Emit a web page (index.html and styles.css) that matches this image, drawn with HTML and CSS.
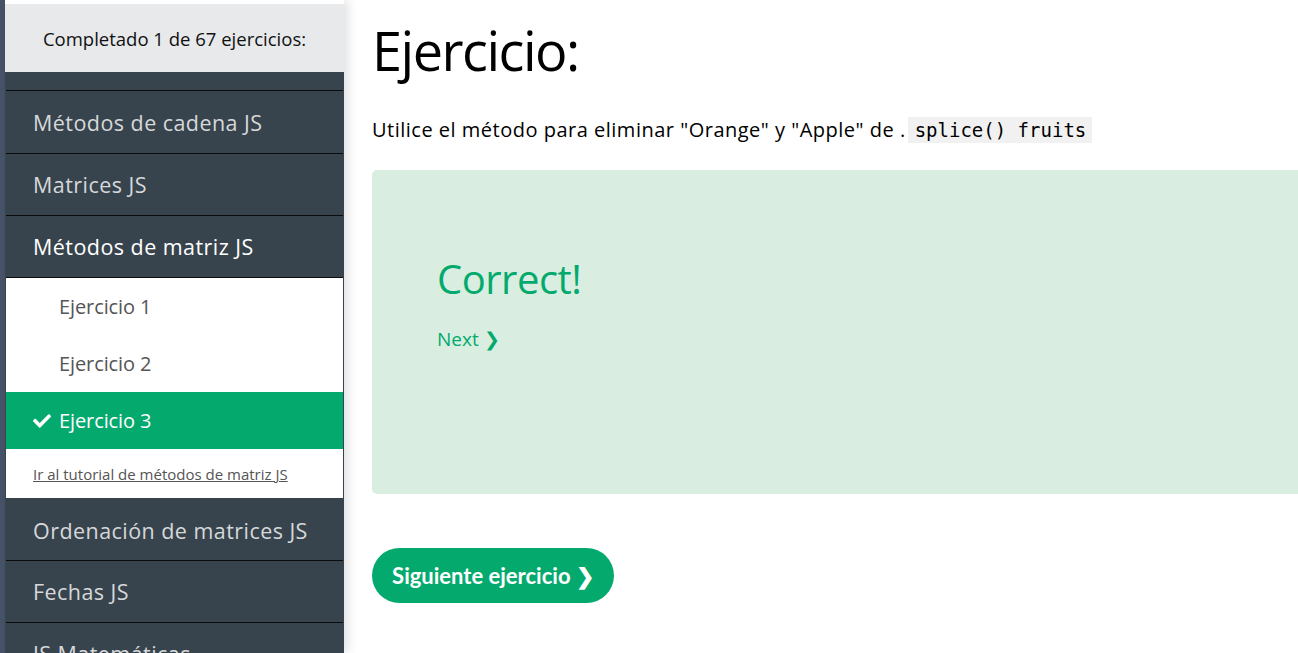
FILE: index.html
```html
<!DOCTYPE html>
<html lang="es">
<head>
<meta charset="utf-8">
<title>Ejercicio</title>
<link rel="stylesheet" href="styles.css">
</head>
<body>
<div class="rail"></div>
<aside class="sidebar">
  <div class="top-gap"></div>
  <div class="progress">Completado 1 de 67 ejercicios:</div>
  <div class="spacer"></div>
  <nav class="menu">
    <div class="item first">Métodos de cadena JS</div>
    <div class="item">Matrices JS</div>
    <div class="item active">Métodos de matriz JS</div>
    <div class="submenu">
      <div class="sub">Ejercicio 1</div>
      <div class="sub">Ejercicio 2</div>
      <div class="sub done"><svg class="check" viewBox="0 0 512 512" width="18" height="18"><path fill="#fff" d="M173.9 439.4l-166.4-166.4c-10-10-10-26.2 0-36.2l36.2-36.2c10-10 26.2-10 36.2 0L192 312.7 432.1 72.6c10-10 26.2-10 36.2 0l36.2 36.2c10 10 10 26.2 0 36.2L210.1 439.4c-10 10-26.2 10-36.2 0z"/></svg>Ejercicio 3</div>
      <div class="tut"><a href="#">Ir al tutorial de métodos de matriz JS</a></div>
    </div>
    <div class="item after-sub">Ordenación de matrices JS</div>
    <div class="item">Fechas JS</div>
    <div class="item">JS Matemáticas</div>
  </nav>
</aside>
<main class="main">
  <h1 class="title">Ejercicio:</h1>
  <p class="task">Utilice el método para eliminar "Orange" y "Apple" de .<code class="code">splice() fruits</code></p>
  <section class="result">
    <h2 class="correct">Correct!</h2>
    <a class="next" href="#">Next ❯</a>
  </section>
  <a class="btn" href="#">Siguiente ejercicio ❯</a>
</main>
</body>
</html>
```
FILE: styles.css
```css
html, body {
  margin: 0;
  padding: 0;
  height: 100%;
  overflow: hidden;
}
body {
  display: flex;
  background: #fff;
  font-family: "Open Sans", "Noto Sans", sans-serif;
}
.rail {
  width: 5px;
  flex: 0 0 5px;
  background: #475366;
  height: 100vh;
}
.sidebar {
  width: 339px;
  flex: 0 0 339px;
  background: #38444d;
  height: 100vh;
  box-shadow: 4px 0 10px rgba(0, 0, 0, 0.12);
  position: relative;
  z-index: 1;
}
.top-gap {
  height: 4px;
  background: #fff;
}
.progress {
  height: 68px;
  background: #e7e9eb;
  display: flex;
  align-items: center;
  justify-content: center;
  font-size: 18.5px;
  color: #111;
}
.spacer {
  height: 18px;
}
.menu {
  padding: 0 1px;
}
.item {
  box-sizing: border-box;
  height: 62px;
  border-top: 1px solid #0c0c0c;
  display: flex;
  align-items: center;
  padding-left: 27px;
  font-size: 21.5px;
  color: #d6d8da;
  letter-spacing: 0.45px;
}
.item.first {
  height: 63px;
}
.item.active {
  color: #fff;
}
.item.after-sub {
  border-top: none;
  padding-top: 3px;
}
.submenu {
  background: #fff;
  border-top: 1px solid #0c0c0c;
}
.sub {
  height: 57px;
  display: flex;
  align-items: center;
  padding-left: 53px;
  font-size: 20px;
  color: #555;
  letter-spacing: -0.1px;
}
.sub.done {
  background: #04aa6d;
  color: #fff;
  padding-left: 27px;
}
.check {
  margin-right: 8px;
}
.tut {
  height: 49px;
  display: flex;
  align-items: center;
  padding-left: 27px;
  font-size: 15px;
}
.tut a {
  color: #555;
  text-decoration: underline;
}
.main {
  flex: 0 0 1000px;
  padding-left: 28px;
}
.title {
  font-size: 54px;
  font-weight: 400;
  margin: 12px 0 0;
  line-height: 76px;
  color: #000;
  letter-spacing: -1.5px;
}
.task {
  margin: 29px 0 0;
  font-size: 20px;
  line-height: 26px;
  color: #000;
  letter-spacing: 0.5px;
}
.code {
  font-family: "DejaVu Sans Mono", "Liberation Mono", monospace;
  font-size: 19px;
  letter-spacing: 0;
  background: #f1f1f1;
  padding: 2px 6px 2px 7px;
  margin-left: 2px;
}
.result {
  margin-top: 27px;
  background: #d9eee1;
  border-radius: 5px;
  height: 324px;
  padding: 83px 0 0 65px;
  box-sizing: border-box;
}
.correct {
  margin: 0;
  font-size: 40px;
  font-weight: 400;
  line-height: 52px;
  color: #04aa6d;
  letter-spacing: -0.5px;
}
.next {
  display: inline-block;
  margin-top: 21px;
  font-size: 19px;
  color: #04aa6d;
  text-decoration: none;
}
.btn {
  display: inline-flex;
  align-items: center;
  justify-content: center;
  margin-top: 54px;
  width: 242px;
  height: 55px;
  border-radius: 28px;
  background: #04aa6d;
  color: #fff;
  font-family: "Lato", "Open Sans", sans-serif;
  font-weight: 700;
  font-size: 22px;
  text-decoration: none;
}
```
